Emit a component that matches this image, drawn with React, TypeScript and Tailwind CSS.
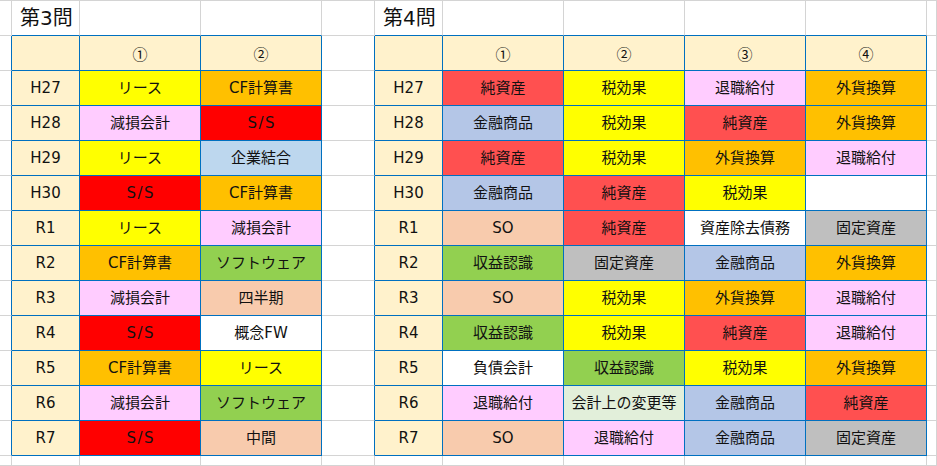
import React from "react";

type C = { t: string; bg: string };

const Y = "bg-[#ffff00]";
const O = "bg-[#ffc000]";
const R = "bg-[#ff0000]";
const LR = "bg-[#ff5050]";
const P = "bg-[#ffccff]";
const B1 = "bg-[#bdd7ee]";
const B2 = "bg-[#b4c6e7]";
const S = "bg-[#f8cbad]";
const G = "bg-[#92d050]";
const W = "bg-white";
const GR = "bg-[#bfbfbf]";
const LG = "bg-[#e2efda]";
const H = "bg-[#fff2cc]";

const labels = ["H27", "H28", "H29", "H30", "R1", "R2", "R3", "R4", "R5", "R6", "R7"];

const t3: C[][] = [
  [{ t: "リース", bg: Y }, { t: "CF計算書", bg: O }],
  [{ t: "減損会計", bg: P }, { t: "S/S", bg: R }],
  [{ t: "リース", bg: Y }, { t: "企業結合", bg: B1 }],
  [{ t: "S/S", bg: R }, { t: "CF計算書", bg: O }],
  [{ t: "リース", bg: Y }, { t: "減損会計", bg: P }],
  [{ t: "CF計算書", bg: O }, { t: "ソフトウェア", bg: G }],
  [{ t: "減損会計", bg: P }, { t: "四半期", bg: S }],
  [{ t: "S/S", bg: R }, { t: "概念FW", bg: W }],
  [{ t: "CF計算書", bg: O }, { t: "リース", bg: Y }],
  [{ t: "減損会計", bg: P }, { t: "ソフトウェア", bg: G }],
  [{ t: "S/S", bg: R }, { t: "中間", bg: S }],
];

const t4: C[][] = [
  [{ t: "純資産", bg: LR }, { t: "税効果", bg: Y }, { t: "退職給付", bg: P }, { t: "外貨換算", bg: O }],
  [{ t: "金融商品", bg: B2 }, { t: "税効果", bg: Y }, { t: "純資産", bg: LR }, { t: "外貨換算", bg: O }],
  [{ t: "純資産", bg: LR }, { t: "税効果", bg: Y }, { t: "外貨換算", bg: O }, { t: "退職給付", bg: P }],
  [{ t: "金融商品", bg: B2 }, { t: "純資産", bg: LR }, { t: "税効果", bg: Y }, { t: "", bg: W }],
  [{ t: "SO", bg: S }, { t: "純資産", bg: LR }, { t: "資産除去債務", bg: W }, { t: "固定資産", bg: GR }],
  [{ t: "収益認識", bg: G }, { t: "固定資産", bg: GR }, { t: "金融商品", bg: B2 }, { t: "外貨換算", bg: O }],
  [{ t: "SO", bg: S }, { t: "税効果", bg: Y }, { t: "外貨換算", bg: O }, { t: "退職給付", bg: P }],
  [{ t: "収益認識", bg: G }, { t: "税効果", bg: Y }, { t: "純資産", bg: LR }, { t: "退職給付", bg: P }],
  [{ t: "負債会計", bg: W }, { t: "収益認識", bg: G }, { t: "税効果", bg: Y }, { t: "外貨換算", bg: O }],
  [{ t: "退職給付", bg: P }, { t: "会計上の変更等", bg: LG }, { t: "金融商品", bg: B2 }, { t: "純資産", bg: LR }],
  [{ t: "SO", bg: S }, { t: "退職給付", bg: P }, { t: "金融商品", bg: B2 }, { t: "固定資産", bg: GR }],
];

const inT1 = (r: number, c: number) => r >= 1 && r <= 12 && c >= 1 && c <= 3;
const inT2 = (r: number, c: number) => r >= 1 && r <= 12 && c >= 5 && c <= 9;
const inT = (r: number, c: number) => inT1(r, c) || inT2(r, c);

function cellData(r: number, c: number): { t: string; bg: string; title?: boolean; circ?: boolean } {
  if (r === 0) {
    if (c === 1) return { t: "第3問", bg: W, title: true };
    if (c === 5) return { t: "第4問", bg: W, title: true };
    return { t: "", bg: W };
  }
  if (r === 1) {
    if (c === 1 || c === 5) return { t: "", bg: H };
    if (c === 2 || c === 6) return { t: "①", bg: H, circ: true };
    if (c === 3 || c === 7) return { t: "②", bg: H, circ: true };
    if (c === 8) return { t: "③", bg: H, circ: true };
    if (c === 9) return { t: "④", bg: H, circ: true };
    return { t: "", bg: W };
  }
  if (r >= 2 && r <= 12) {
    const i = r - 2;
    if (c === 1 || c === 5) return { t: labels[i], bg: H };
    if (c === 2 || c === 3) return t3[i][c - 2];
    if (c >= 6 && c <= 9) return t4[i][c - 6];
  }
  return { t: "", bg: W };
}

const widths = ["w-[12px]", "w-[68px]", "w-[121px]", "w-[121px]", "w-[53px]", "w-[68px]", "w-[121px]", "w-[121px]", "w-[121px]", "w-[121px]", "flex-1"];

function Text({ d }: { d: { t: string; circ?: boolean } }) {
  if (d.circ) {
    return <span style={{ fontFamily: '"Noto Sans CJK JP", sans-serif' }} className="text-[15px]">{d.t}</span>;
  }
  if (d.t === "S/S") {
    return <span className="tracking-[1.5px] pl-[1.5px]">{d.t}</span>;
  }
  return <span>{d.t}</span>;
}

export default function App() {
  const rows = Array.from({ length: 14 }, (_, r) => r);
  return (
    <div
      className="w-[937px] h-[466px] overflow-hidden bg-white border-t border-[#d4d4d4] text-[15px] text-[#111]"
      style={{ fontFamily: '"DejaVu Sans", "Noto Sans CJK JP", sans-serif' }}
    >
      {rows.map((r) => (
        <div key={r} className={r === 13 ? "flex h-[10px]" : "flex h-[35px]"}>
          {widths.map((w, c) => {
            const d = cellData(r, c);
            const rightBlue = inT(r, c) || inT(r, c + 1);
            const bottomBlue = inT(r, c) || inT(r + 1, c);
            const rb = rightBlue ? "border-r-[#0070c0]" : "border-r-[#d4d4d4]";
            const bb = bottomBlue ? "border-b-[#0070c0]" : "border-b-[#d4d4d4]";
            const align = d.title
              ? "justify-start pl-[8px] text-[20px]"
              : "justify-center";
            return (
              <div
                key={c}
                className={`${w} shrink-0 h-full border-r border-b ${rb} ${bb} ${d.bg} flex items-center ${align} whitespace-nowrap leading-none`}
              >
                <Text d={d} />
              </div>
            );
          })}
        </div>
      ))}
    </div>
  );
}
